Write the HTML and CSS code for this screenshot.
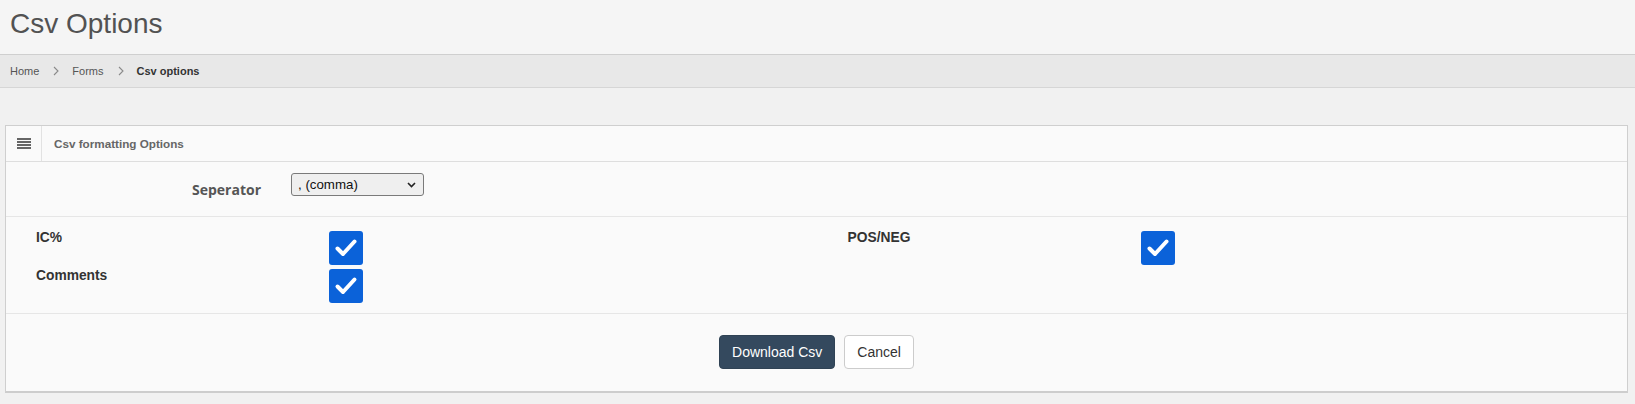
FILE: index.html
```html
<!DOCTYPE html>
<html>
<head>
<meta charset="utf-8">
<title>Csv Options</title>
<link rel="stylesheet" href="styles.css">
</head>
<body>
<header class="page-header">
  <h1 class="page-title">Csv Options</h1>
</header>
<nav class="breadcrumb">
  <span class="crumb">Home</span>
  <svg class="crumb-sep" width="6" height="10" viewBox="0 0 6 10"><polyline points="1,1 5,5 1,9" fill="none" stroke="#8a8a8a" stroke-width="1.1"/></svg>
  <span class="crumb">Forms</span>
  <svg class="crumb-sep" width="6" height="10" viewBox="0 0 6 10"><polyline points="1,1 5,5 1,9" fill="none" stroke="#8a8a8a" stroke-width="1.1"/></svg>
  <span class="crumb crumb-active">Csv options</span>
</nav>
<main class="content">
  <section class="panel">
    <div class="panel-head">
      <div class="panel-icon">
        <svg width="14" height="11" viewBox="0 0 14 11"><rect x="0" y="0" width="14" height="2" fill="#666"/><rect x="0" y="3" width="14" height="2" fill="#666"/><rect x="0" y="6" width="14" height="2" fill="#666"/><rect x="0" y="9" width="14" height="2" fill="#666"/></svg>
      </div>
      <div class="panel-title">Csv formatting Options</div>
    </div>
    <div class="row-sep">
      <label class="sep-label">Seperator</label>
      <div class="select-wrap">
        <select class="sep-select">
          <option>, (comma)</option>
          <option>; (semicolon)</option>
          <option>tab</option>
        </select>
        <svg class="select-arrow" width="9" height="6" viewBox="0 0 9 6"><polyline points="1,1 4.5,4.5 8,1" fill="none" stroke="#222" stroke-width="1.6"/></svg>
      </div>
    </div>
    <div class="row-checks">
      <div class="half">
        <div class="check-label">IC%</div>
        <div class="checkbox"><svg width="34" height="34" viewBox="0 0 34 34"><polyline points="8.5,17.5 14,23 25.5,10.5" fill="none" stroke="#fff" stroke-width="4" stroke-linecap="round" stroke-linejoin="round"/></svg></div>
        <div class="check-label">Comments</div>
        <div class="checkbox"><svg width="34" height="34" viewBox="0 0 34 34"><polyline points="8.5,17.5 14,23 25.5,10.5" fill="none" stroke="#fff" stroke-width="4" stroke-linecap="round" stroke-linejoin="round"/></svg></div>
      </div>
      <div class="half">
        <div class="check-label">POS/NEG</div>
        <div class="checkbox"><svg width="34" height="34" viewBox="0 0 34 34"><polyline points="8.5,17.5 14,23 25.5,10.5" fill="none" stroke="#fff" stroke-width="4" stroke-linecap="round" stroke-linejoin="round"/></svg></div>
      </div>
    </div>
    <div class="panel-foot">
      <button class="btn btn-primary">Download Csv</button>
      <button class="btn btn-default">Cancel</button>
    </div>
  </section>
</main>
</body>
</html>
```
FILE: styles.css
```css
* { box-sizing: border-box; }
html, body { margin: 0; padding: 0; }
body {
  font-family: "Liberation Sans", Arial, sans-serif;
  background: #f1f1f1;
  color: #333;
  height: 404px;
  overflow: hidden;
}
.page-header {
  background: #f5f5f5;
  height: 54px;
  padding: 8px 10px 0;
}
.page-title {
  margin: 0;
  font-size: 28px;
  line-height: 32px;
  font-weight: normal;
  color: #525252;
}
.breadcrumb {
  background: #e8e8e8;
  border-top: 1px solid #cfcfcf;
  border-bottom: 1px solid #d6d6d6;
  height: 34px;
  display: flex;
  align-items: center;
  padding: 0 10px;
  font-size: 11px;
}
.crumb { color: #555; }
.crumb-active { color: #333; font-weight: bold; }
.crumb-sep { margin: 0 13px 0 14px; }
.content {
  padding: 37px 7px 0 5px;
}
.panel {
  background: #fafafa;
  border: 1px solid #cfcfcf;
  border-bottom-width: 2px;
  border-bottom-color: #cdcdcd;
}
.panel-head {
  display: flex;
  height: 36px;
  border-bottom: 1px solid #dedede;
}
.panel-icon {
  width: 36px;
  border-right: 1px solid #e2e2e2;
  display: flex;
  align-items: center;
  justify-content: center;
  padding-left: 1px;
}
.panel-title {
  padding-left: 12px;
  display: flex;
  align-items: center;
  font-size: 11.7px;
  font-weight: bold;
  color: #666;
}
.row-sep {
  display: grid;
  grid-template-columns: 270px 1fr;
  align-items: start;
  padding: 11px 0 16px;
  border-bottom: 1px solid #e6e6e6;
}
.sep-label {
  text-align: right;
  padding-right: 15px;
  padding-top: 7px;
  font-family: "Open Sans", "Liberation Sans", sans-serif;
  font-size: 14px;
  line-height: 20px;
  font-weight: 700;
  color: #555;
}
.select-wrap {
  position: relative;
  margin-left: 15px;
  width: 133px;
  height: 23px;
}
.sep-select {
  appearance: none;
  -webkit-appearance: none;
  width: 133px;
  height: 23px;
  border: 1px solid #7a7a7a;
  border-radius: 3px;
  background: #efefef;
  font-family: "Liberation Sans", Arial, sans-serif;
  font-size: 13.3px;
  color: #111;
  padding: 0 0 0 6px;
  margin: 0;
}
.select-arrow {
  position: absolute;
  right: 8px;
  top: 9px;
  pointer-events: none;
}
.row-checks {
  display: grid;
  grid-template-columns: 1fr 1fr;
  padding: 14px 0 10px;
  border-bottom: 1px solid #e6e6e6;
}
.half {
  display: grid;
  grid-template-columns: 293px 34px;
  grid-auto-rows: 34px;
  row-gap: 4px;
  padding-left: 30px;
}
.half + .half { padding-left: 31px; }
.check-label {
  font-size: 13.8px;
  line-height: 14px;
  font-weight: bold;
  color: #333;
}
.checkbox {
  width: 34px;
  height: 34px;
  background: #0b62d9;
  border-radius: 3px;
}
.checkbox svg { display: block; }
.panel-foot {
  display: flex;
  justify-content: center;
  gap: 9px;
  padding: 21px 0 22px;
}
.btn {
  font-family: "Liberation Sans", Arial, sans-serif;
  font-size: 14px;
  line-height: 20px;
  padding: 6px 12px;
  border-radius: 4px;
  border: 1px solid transparent;
  height: 34px;
  margin: 0;
}
.btn-primary {
  background: #34495e;
  border-color: #2f4254;
  color: #fff;
}
.btn-default {
  background: #fff;
  border-color: #ccc;
  color: #333;
}
```
